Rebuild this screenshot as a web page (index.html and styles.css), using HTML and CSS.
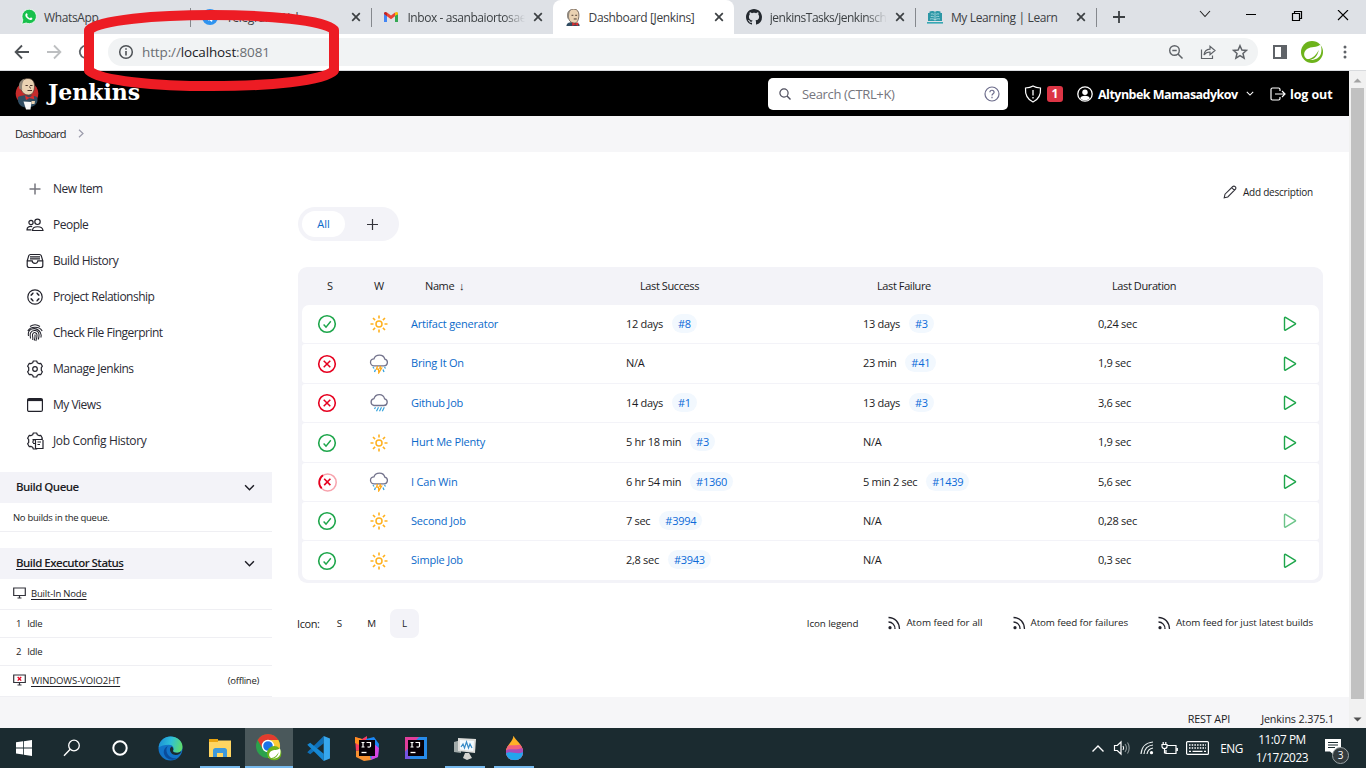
FILE: index.html
```html
<!DOCTYPE html>
<html lang="en">
<head>
<meta charset="utf-8">
<title>Dashboard [Jenkins]</title>
<link rel="stylesheet" href="styles.css">
</head>
<body>
<svg class="defs" width="0" height="0">
  <symbol id="x" viewBox="0 0 10 10"><path d="M1.2 1.2l7.6 7.6M8.8 1.2L1.2 8.8" stroke="#3c4043" stroke-width="1.7" fill="none"/></symbol>
  <symbol id="ok" viewBox="0 0 20 20"><circle cx="10" cy="10" r="8.3" fill="none" stroke="#1ea64b" stroke-width="1.6"/><path d="M6.6 10.6l2.4 2.5 4.8-5.9" fill="none" stroke="#1ea64b" stroke-width="1.4"/></symbol>
  <symbol id="bad" viewBox="0 0 20 20"><circle cx="10" cy="10" r="8.3" fill="none" stroke="#e6001f" stroke-width="1.6"/><path d="M6.7 6.7l6.6 6.6M13.3 6.7l-6.6 6.6" fill="none" stroke="#e6001f" stroke-width="1.5"/></symbol>
  <symbol id="busy" viewBox="0 0 20 20"><circle cx="10.7" cy="10.4" r="8.5" fill="none" stroke="#f7a3ad" stroke-width="1.5"/><path d="M4.700 16.400A8.500 8.500 0 0 1 6 3.300" fill="none" stroke="#e6001f" stroke-width="1.700"/><path d="M7.200 6.700l6.200 6.400M13.400 6.700l-6.200 6.400" fill="none" stroke="#e6001f" stroke-width="1.600"/></symbol>
  <symbol id="sun" viewBox="0 0 20 20"><circle cx="10" cy="10" r="3" fill="none" stroke="#ffb11f" stroke-width="1.500"/><path d="M10 1.500v3M10 15.500v3M1.500 10h3M15.500 10h3M4 4l2.100 2.100M13.900 13.900L16 16M4 16l2.100-2.100M13.900 6.100L16 4" stroke="#ffb11f" stroke-width="1.600" fill="none"/></symbol>
  <symbol id="storm" viewBox="0 0 20 20"><path d="M5 11.800h10.200a3.400 3.400 0 0 0 .6-6.700c-.6-2.400-2.600-4-5.300-4S5.700 2.600 5 4.800a3.500 3.500 0 0 0 0 7z" fill="#fff" stroke="#73738c" stroke-width="1.300"/><path d="M4 13l1 1.500M6.500 15.500l-1 2.500M15.500 13l1 1.500M14 15.500l1 2.500" stroke="#36a3dc" stroke-width="1.300"/><path d="M8.500 12l-1 3.200h2l.3 3.600 2.800-4.600h-1.800l.7-2.200" fill="none" stroke="#ffa914" stroke-width="1.300"/></symbol>
  <symbol id="rain" viewBox="0 0 20 20"><path d="M5 12.500h10a3.400 3.400 0 0 0 .6-6.700c-.6-2.600-2.600-4.200-5.200-4.200S5.700 3.200 5 5.600a3.500 3.500 0 0 0 0 6.900z" fill="#fff" stroke="#73738c" stroke-width="1.300"/><path d="M6.500 14.200l-1 1.800M9.500 14.200l-2 4M12.500 14.200l-2 4M15.300 14.200l-2 4" stroke="#36a3dc" stroke-width="1.200"/></symbol>
  <symbol id="play" viewBox="0 0 14 16"><path d="M1.500 1.900c0-.6.500-.8 1-.5l9.800 5.900c.4.300.4.600 0 .9l-9.800 5.900c-.5.300-1 .1-1-.5z" fill="none" stroke="#1ea64b" stroke-width="1.400"/></symbol>
  <symbol id="rss" viewBox="0 0 14 14"><path d="M1.500 6a6.500 6.500 0 0 1 6.500 7M1.500 1.500C8 1.500 12.300 6.500 12.500 13" fill="none" stroke="#22222b" stroke-width="1.300"/><circle cx="3" cy="11.700" r="1.600" fill="#22222b"/></symbol>
  <symbol id="down" viewBox="0 0 10 8"><path d="M1 2l4 4 4-4" fill="none" stroke="currentColor" stroke-width="1.300"/></symbol>
  <symbol id="gear" viewBox="0 0 18 18"><path d="M6.700 2.700L7.300 1h3.400l.6 1.700 1.600.9 1.800-.3 1.700 2.900-1.100 1.400v2.800l1.100 1.400-1.700 2.900-1.800-.3-1.600.9-.6 1.700H7.300l-.6-1.700-1.600-.9-1.800.3-1.700-2.900 1.100-1.400V7.600L1.600 6.200l1.700-2.900 1.800.3z" fill="none" stroke="#22222b" stroke-width="1.200" stroke-linejoin="round"/></symbol>
  <symbol id="spring" viewBox="0 0 22 22"><circle cx="11" cy="11" r="11" fill="#6db31b"/><path d="M19.500 3.500c-3.500 3.600-9.500 1.600-13.500 4.600-4 3-3.400 7.500-.5 9.600 4.500 2.800 12.500.8 14.400-5 .9-2.900.8-6.300-.4-9.200z" fill="#fff"/><path d="M4.500 18.500c5-.2 10-2.700 13.300-9.500-1.300 7-6 10.500-11.500 10.200z" fill="#6db31b"/></symbol>
  <symbol id="butler" viewBox="0 0 24 32"><circle cx="12" cy="15.500" r="11.300" fill="#c52b2b"/><path d="M3 19c3-2.500 15-2.500 19 0 1 3 .5 5-1 7-3 4-12 5-16 1-2-2-2.500-5-2-8z" fill="#304c61"/><path d="M5 8c0-5 4-7.500 8-7.500 5 0 6.500 4 6.500 7.500 0 5-2 9-6 9-5 0-7.500-4-8.500-9z" fill="#ead2b2" stroke="#4b3a30" stroke-width=".7"/><path d="M4.500 11C3 6 5 2 9.500.8 7.500 4 6.500 7 7.200 12z" fill="#8f8679"/><path d="M10.500 7.500h2.300M15 7.500h2.500M12.500 12.500h4.500M14.500 8.500l1 2" stroke="#4b352b" stroke-width="1" fill="none"/><path d="M10 17.500l4 2 4.500-2.500.8 4.300-4.800-1.300L11 22z" fill="#df2c2c"/><path d="M8.500 23.500l8 .5-1 7.500h-4.500z" fill="#f7f7f7"/><path d="M16.500 23h3.500l-.5 3h-3z" fill="#ead2b2"/></symbol>
  <symbol id="ij" viewBox="0 0 16 16"><path d="M0 0h16v16H0z" fill="#070007"/><path d="M2.500 2.500h3M4 2.500v4.500M2.500 7h3M7.500 2.500h4V6c0 1-1.500 1.500-3 .7" fill="none" stroke="#fff" stroke-width="1.200"/><path d="M2.500 12.500h5" stroke="#fff" stroke-width="1.300"/></symbol>
</svg>

<div class="screen">
  <div class="tabs">
    <div class="tab"><svg class="wa" width="16" height="16" viewBox="0 0 16 16"><path d="M.8 15.200l1-4.400A7.200 7.200 0 1 1 5.200 14z" fill="#18c04c" stroke="#fff" stroke-width=".8"/><path d="M5.500 4.200c.8-.3 1.100 1.400 1.100 1.700 0 .5-.6.7-.4 1.100.6 1.100 1.400 1.800 2.500 2.300.4.100.7-.8 1.100-.8.300 0 1.600.6 1.600.9 0 1-1 1.600-2 1.500C6.500 10.500 4.500 8 4.300 6.300c0-1 .6-1.900 1.200-2.100z" fill="#fff"/></svg><span class="tab-t">WhatsApp</span></div>
    <div class="tab sep"><svg width="16" height="16" viewBox="0 0 16 16"><circle cx="8" cy="8" r="8" fill="#2e93f0"/><path d="M3 8l9-4-2 9-3-2-1 1v-3z" fill="#fff"/></svg><span class="tab-t">Telegram Web</span><svg width="10" height="10"><use href="#x"/></svg></div>
    <div class="tab sep"><svg width="16" height="16" viewBox="0 0 16 16"><path d="M1 3.500V13h3V6.500z" fill="#4285f4"/><path d="M15 3.500V13h-3V6.500z" fill="#34a853"/><path d="M12 6.500V3.600c1.500-1.200 3-.6 3 .9v1z" fill="#fbbc04"/><path d="M4 3.600L8 6.600l4-3V7.300l-4 3-4-3z" fill="#ea4335"/><path d="M1 4.500c0-1.500 1.500-2.100 3-.9v3.700l-3-2.300z" fill="#c5221f"/></svg><span class="tab-t fade">Inbox - asanbaiortosae</span><svg width="10" height="10"><use href="#x"/></svg></div>
    <div class="tab on"><svg width="16" height="17" viewBox="2 0 20 23"><path d="M3 23c1-5 4-5 9-5s9 1 9 5z" fill="#304c61"/><path d="M5 8c0-5 4-8 8-8 5 0 7 4 7 8 0 6-2 11-6 11-5 0-8-3-9-11z" fill="#ead2b2" stroke="#55483e" stroke-width="1"/><path d="M4.500 13C3 6 5 2 9 .6 7 5 6 8 7 14z" fill="#8f877d"/><path d="M10 8.500h2.500M15 8.500h2.500M13 13.500h4" stroke="#3b2c25" stroke-width="1.200"/><path d="M11 18l4 2 4-2v5l-4-2-4 2z" fill="#df2c2c"/></svg><span class="tab-t">Dashboard [Jenkins]</span><svg width="10" height="10"><use href="#x"/></svg></div>
    <div class="tab"><svg width="16" height="16" viewBox="0 0 16 16"><path fill="#24292f" d="M8 0C3.580 0 0 3.580 0 8c0 3.540 2.290 6.530 5.470 7.590.4.070.55-.17.55-.38 0-.19-.01-.82-.01-1.490-2.010.37-2.530-.49-2.690-.94-.09-.23-.48-.94-.82-1.130-.28-.15-.68-.52-.01-.53.63-.01 1.080.58 1.230.82.72 1.210 1.870.87 2.330.66.07-.52.28-.87.51-1.070-1.780-.2-3.640-.89-3.640-3.950 0-.87.31-1.590.82-2.150-.08-.2-.36-1.020.08-2.120 0 0 .67-.21 2.200.82.64-.18 1.320-.27 2-.27s1.360.09 2 .27c1.530-1.040 2.200-.82 2.200-.82.44 1.100.16 1.920.08 2.120.51.56.82 1.270.82 2.150 0 3.070-1.870 3.750-3.650 3.950.29.25.54.73.54 1.480 0 1.070-.01 1.930-.01 2.200 0 .21.15.46.55.38A8.010 8.010 0 0 0 16 8c0-4.420-3.580-8-8-8z"/></svg><span class="tab-t fade gh">jenkinsTasks/jenkinsch</span><svg width="10" height="10"><use href="#x"/></svg></div>
    <div class="tab sep"><svg width="16" height="16" viewBox="0 0 16 16"><path d="M1 12V4h1.500V2.500C5 1.500 7 2 8 3c1-1 3-1.500 5.500-.5V4H15v8z" fill="#2c97a6"/><path d="M0 13h16v1.600H0z" fill="#36a7b4"/><path d="M8 3.500v8M3.800 5c1-.3 2-.2 3 .3M3.800 7.500c1-.3 2-.2 3 .3M9.200 5.300c1-.5 2-.6 3-.3M9.200 7.800c1-.5 2-.6 3-.3M3 10c2-.5 4-.2 5 1 1-1.200 3-1.500 5-1" fill="none" stroke="#bfe3e8" stroke-width=".8"/></svg><span class="tab-t">My Learning | Learn</span><svg width="10" height="10"><use href="#x"/></svg></div>
    <div class="newtab sep"><svg width="12" height="12" viewBox="0 0 12 12"><path d="M6 0v12M0 6h12" stroke="#3c4043" stroke-width="1.800"/></svg></div>
    <div class="winbtns">
      <svg width="12" height="8" viewBox="0 0 12 8"><path d="M1 1l5 5.500L11 1" fill="none" stroke="#222" stroke-width="1.100"/></svg>
      <svg width="12" height="10" viewBox="0 0 12 10"><path d="M1 4.500h10" stroke="#000"/></svg>
      <svg width="12" height="12" viewBox="0 0 12 12"><path d="M1.500 3.500h7v7h-7zM3.500 3.500v-2h7v7h-2" fill="none" stroke="#000" stroke-width="1.200"/></svg>
      <svg width="12" height="12" viewBox="0 0 12 12"><path d="M1 0l10 10M11 0L1 10" stroke="#000" stroke-width="1.100"/></svg>
    </div>
  </div>

  <div class="toolbar">
    <svg width="16" height="16" viewBox="0 0 16 16"><path d="M15 8H2M8 1.500L1.600 8 8 14.500" fill="none" stroke="#4e5256" stroke-width="1.800"/></svg>
    <svg width="16" height="16" viewBox="0 0 16 16"><path d="M1 8h13M8 1.500L14.400 8 8 14.500" fill="none" stroke="#bdbfc1" stroke-width="1.800"/></svg>
    <svg width="16" height="16" viewBox="0 0 16 16"><path d="M13 4.200A6.200 6.200 0 1 0 14.200 8M14 1v4.500H9.500" fill="none" stroke="#5f6368" stroke-width="1.800"/></svg>
    <div class="omni">
      <svg width="16" height="16" viewBox="0 0 16 16"><circle cx="8" cy="8" r="6.300" fill="none" stroke="#4e5256" stroke-width="1.500"/><path d="M8 7v4.500M8 4.300v1.500" stroke="#4e5256" stroke-width="1.600"/></svg>
      <span class="url">http://<b>localhost</b>:8081</span>
      <svg width="16" height="16" viewBox="0 0 16 16"><circle cx="6.500" cy="6.500" r="4.800" fill="none" stroke="#5f6368" stroke-width="1.400"/><path d="M10 10l4.500 4.500M4.300 6.500h4.400" stroke="#5f6368" stroke-width="1.500"/></svg>
      <svg width="16" height="16" viewBox="0 0 16 16"><path d="M1.500 5.500v9h11v-3M4 11c.4-4 2.500-5.700 6-5.900V2.200L15 6.500l-5 4.300V8C7.500 8 5.500 8.800 4 11z" fill="none" stroke="#5f6368" stroke-width="1.200"/></svg>
      <svg width="16" height="16" viewBox="0 0 16 16"><path d="M8 1.700l1.900 4.300 4.600.4-3.500 3.100 1.100 4.600L8 11.700l-4.100 2.400L5 9.500 1.500 6.400l4.600-.4z" fill="none" stroke="#5f6368" stroke-width="1.500"/></svg>
    </div>
    <svg width="14" height="14" viewBox="0 0 14 14"><path d="M1 1h12v12H1z" fill="#fff" stroke="#5f6368" stroke-width="2"/><path d="M8 1h5v12H8z" fill="#5f6368"/></svg>
    <svg class="ext" width="22" height="22"><use href="#spring"/></svg>
    <svg width="4" height="14" viewBox="0 0 4 14"><circle cx="2" cy="2" r="1.500" fill="#5f6368"/><circle cx="2" cy="7" r="1.500" fill="#5f6368"/><circle cx="2" cy="12" r="1.500" fill="#5f6368"/></svg>
  </div>

  <div class="view">
    <div class="page">
      <header class="top">
        <svg width="24" height="32"><use href="#butler"/></svg>
        <span class="brand">Jenkins</span>
        <div class="search">
          <svg width="12" height="12" viewBox="0 0 12 12"><circle cx="5" cy="5" r="4.100" fill="none" stroke="#4d4d5c" stroke-width="1.200"/><path d="M8 8l3.500 3.500" stroke="#4d4d5c" stroke-width="1.400"/></svg>
          <span class="ph">Search (CTRL+K)</span>
          <svg width="16" height="16" viewBox="0 0 16 16"><circle cx="8" cy="8" r="7" fill="none" stroke="#6d6d8c" stroke-width="1.200"/><path d="M5.900 6.300c.1-2.800 4.200-2.600 4.200 0 0 1.500-2.100 1.500-2.100 3.200M8 10.800v1.400" fill="none" stroke="#6d6d8c" stroke-width="1.200"/></svg>
        </div>
        <svg class="shield" width="18" height="18" viewBox="0 0 18 18"><path d="M9 1c2 1.300 4.500 1.900 7.500 2C17 10 14.500 14.500 9 17 3.500 14.500 1 10 1.500 3 4.500 2.900 7 2.300 9 1z" fill="none" stroke="#fff" stroke-width="1.200"/><path d="M9 5v5.500M9 12v1.400" stroke="#fff" stroke-width="1.300"/></svg>
        <span class="alert">1</span>
        <svg class="usr" width="16" height="16" viewBox="0 0 16 16"><circle cx="8" cy="8" r="7.200" fill="none" stroke="#fff" stroke-width="1.300"/><circle cx="8" cy="6.200" r="2.700" fill="#fff"/><path d="M3.200 12.200C4.500 9 11.500 9 12.800 12.200 10.500 15 5.500 15 3.200 12.200z" fill="#fff"/></svg>
        <span class="who">Altynbek Mamasadykov</span>
        <svg class="whod" width="8" height="7"><use href="#down"/></svg>
        <svg class="out" width="16" height="14" viewBox="0 0 16 14"><path d="M10 4V2.500c0-1-.5-1.500-1.500-1.500h-6C1.500 1 1 1.500 1 2.500v9c0 1 .5 1.500 1.500 1.500h6c1 0 1.500-.5 1.500-1.500V10M5 7h10M12 4l3 3-3 3" fill="none" stroke="#fff" stroke-width="1.200"/></svg>
        <span class="lo">log out</span>
      </header>
      <nav class="crumbs"><span>Dashboard</span><svg width="6" height="9" viewBox="0 0 6 9"><path d="M1 .7l4 3.800-4 3.800" fill="none" stroke="#9b9bab" stroke-width="1.200"/></svg></nav>

      <div class="body">
        <aside class="side">
          <ul class="tasks">
            <li><svg width="18" height="18" viewBox="0 0 18 18"><path d="M9 3.500v11M3.500 9h11" stroke="#77777f" stroke-width="1.500"/></svg><span>New Item</span></li>
            <li><svg width="18" height="18" viewBox="0 0 18 18"><g fill="none" stroke="#22222b" stroke-width="1.200"><circle cx="11.500" cy="5.800" r="2.700"/><circle cx="5" cy="6.500" r="2.100"/><path d="M6.500 14.500c0-5 10-5 10.500 0zM6.200 10.600C3 10 1 11.500 1 13.800h4.500"/></g></svg><span>People</span></li>
            <li><svg width="18" height="18" viewBox="0 0 18 18"><g fill="none" stroke="#22222b" stroke-width="1.200"><path d="M1.200 8.800h5c0 3.400 5.600 3.400 5.600 0h5v4.700c0 1.300-.7 2-2 2H3.200c-1.300 0-2-.7-2-2zM1.200 8.800l1.500-5c.3-1 .9-1.300 1.800-1.300h9c.9 0 1.500.3 1.800 1.300l1.500 5M4 4.800h10M4 6.900h10"/></g></svg><span>Build History</span></li>
            <li><svg width="18" height="18" viewBox="0 0 18 18"><circle cx="9" cy="9" r="7.200" fill="none" stroke="#22222b" stroke-width="1.200"/><path d="M7.500 5.300H7L5.300 7v.7M10.500 5.300h.5L12.700 7v.7M7.500 12.700H7L5.300 11v-.7M10.500 12.700h.5l1.700-1.700v-.7" fill="none" stroke="#22222b" stroke-width="1.600"/></svg><span>Project Relationship</span></li>
            <li><svg width="18" height="18" viewBox="0 0 18 18"><g fill="none" stroke="#22222b" stroke-width="1.050"><path d="M4 2.500c3-2 7-2 10 0M1.800 7C4.500 2 13.500 2 16.200 7M2.500 12C1 4.500 9 3 12.800 6.500c2.500 2.300 2.700 5 2 7M4.500 14.500c0-2-.8-3.500 0-5.500C6.500 5 12.500 6 13 10.500c.1 2-.2 3.500-.8 5M6.700 16c.6-2.500-.7-4.500 0-6C8 7.500 11 8.700 11 11c0 2-.3 4-1.200 6M9 10.500c.2 2.500-.1 4-.7 6"/></g></svg><span>Check File Fingerprint</span></li>
            <li><svg width="18" height="18" viewBox="0 0 18 18"><use href="#gear"/><circle cx="9" cy="9" r="2.300" fill="none" stroke="#22222b" stroke-width="1.200"/></svg><span>Manage Jenkins</span></li>
            <li><svg width="18" height="18" viewBox="0 0 18 18"><rect x="1.600" y="2.600" width="14.800" height="12.800" rx="1.500" fill="none" stroke="#22222b" stroke-width="1.200"/><path d="M1.600 4h14.800" stroke="#22222b" stroke-width="2.200"/></svg><span>My Views</span></li>
            <li><svg width="18" height="18" viewBox="0 0 18 18"><use href="#gear"/><path d="M9 8h8v9H9z" fill="#fff"/><path d="M7 11V9.500C7 7.500 9.500 7 9.500 9v7.500H17V8M6.500 7.500h10.300M7 11.500h2.500M11.500 10h3.500M11.500 12.500H14" fill="none" stroke="#22222b" stroke-width="1.200"/></svg><span class="jc">Job Config History</span></li>
          </ul>
          <div class="pane-h"><span>Build Queue</span><svg width="11" height="9"><use href="#down"/></svg></div>
          <div class="row q"><span>No builds in the queue.</span></div>
          <div class="pane-h second"><span class="u1">Build Executor Status</span><svg width="11" height="9"><use href="#down"/></svg></div>
          <div class="row n1"><svg width="13" height="12" viewBox="0 0 13 12"><path d="M.7 1h11.600v7.500H.7zM4.500 11h4M6.500 8.500V11" fill="none" stroke="#33333b" stroke-width="1.200"/></svg><span class="u">Built-In Node</span></div>
          <div class="row idle"><span>1</span><span>Idle</span></div>
          <div class="row idle"><span>2</span><span>Idle</span></div>
          <div class="row n2"><svg width="13" height="12" viewBox="0 0 13 12"><path d="M.7 1h11.600v7.500H.7zM4.500 11h4M6.500 8.500V11" fill="none" stroke="#33333b" stroke-width="1.200"/><path d="M4.700 3l3.500 3.600M8.200 3L4.700 6.600" stroke="#e6001f" stroke-width="1.300"/></svg><span class="u win">WINDOWS-VOIO2HT</span><span class="off">(offline)</span></div>
        </aside>

        <main class="main">
          <div class="desc"><svg width="14" height="14" viewBox="0 0 14 14"><path d="M1.200 12.800l.8-3.600L9.800 1.500c1.500-1.200 3.900.8 2.700 2.700L4.800 12zM8.800 2.700l2.600 2.600" fill="none" stroke="#33333b" stroke-width="1.100"/></svg><span>Add description</span></div>
          <div class="views"><span class="all">All</span><svg width="11" height="11" viewBox="0 0 11 11"><path d="M5.500 0v11M0 5.500h11" stroke="#33333b" stroke-width="1.200"/></svg></div>

          <div class="tbl">
            <div class="th"><span class="hs">S</span><span class="hw">W</span><span>Name&nbsp; ↓</span><span>Last Success</span><span>Last Failure</span><span>Last Duration</span></div>
            <div class="rows">
              <div class="tr"><svg class="st"><use href="#ok"/></svg><svg class="st"><use href="#sun"/></svg><a>Artifact generator</a><span>12 days<i>#8</i></span><span>13 days<i>#3</i></span><span>0,24 sec</span><svg class="pl"><use href="#play"/></svg></div>
              <div class="tr"><svg class="st"><use href="#bad"/></svg><svg class="st"><use href="#storm"/></svg><a>Bring It On</a><span>N/A</span><span>23 min<i>#41</i></span><span>1,9 sec</span><svg class="pl"><use href="#play"/></svg></div>
              <div class="tr"><svg class="st"><use href="#bad"/></svg><svg class="st"><use href="#rain"/></svg><a>Github Job</a><span>14 days<i>#1</i></span><span>13 days<i>#3</i></span><span>3,6 sec</span><svg class="pl"><use href="#play"/></svg></div>
              <div class="tr"><svg class="st"><use href="#ok"/></svg><svg class="st"><use href="#sun"/></svg><a>Hurt Me Plenty</a><span>5 hr 18 min<i>#3</i></span><span>N/A</span><span>1,9 sec</span><svg class="pl"><use href="#play"/></svg></div>
              <div class="tr"><svg class="st"><use href="#busy"/></svg><svg class="st"><use href="#storm"/></svg><a>I Can Win</a><span>6 hr 54 min<i>#1360</i></span><span>5 min 2 sec<i>#1439</i></span><span>5,6 sec</span><svg class="pl"><use href="#play"/></svg></div>
              <div class="tr"><svg class="st"><use href="#ok"/></svg><svg class="st"><use href="#sun"/></svg><a>Second Job</a><span>7 sec<i>#3994</i></span><span>N/A</span><span>0,28 sec</span><svg class="pl dim"><use href="#play"/></svg></div>
              <div class="tr"><svg class="st"><use href="#ok"/></svg><svg class="st"><use href="#sun"/></svg><a>Simple Job</a><span>2,8 sec<i>#3943</i></span><span>N/A</span><span>0,3 sec</span><svg class="pl"><use href="#play"/></svg></div>
            </div>
          </div>

          <div class="legend">
            <span class="ic">Icon:</span><span class="sz">S</span><span class="sz">M</span><span class="sz cur">L</span>
            <span class="lg">Icon legend</span>
            <span class="feed f1"><svg width="14" height="14"><use href="#rss"/></svg><span>Atom feed for all</span></span>
            <span class="feed"><svg width="14" height="14"><use href="#rss"/></svg><span>Atom feed for failures</span></span>
            <span class="feed f3"><svg width="14" height="14"><use href="#rss"/></svg><span>Atom feed for just latest builds</span></span>
          </div>
        </main>
      </div>
      <footer class="foot"><span>REST API</span><span>Jenkins 2.375.1</span></footer>
    </div>
    <div class="scroll"><svg width="9" height="5" viewBox="0 0 9 5"><path d="M.5 4.500l4-4 4 4z" fill="#a3a3a3"/></svg><div class="thumb"></div><svg width="9" height="5" viewBox="0 0 9 5"><path d="M.5.5l4 4 4-4z" fill="#505050"/></svg></div>
  </div>

  <div class="taskbar">
    <div class="tb"><svg width="16" height="16" viewBox="0 0 16 16"><path d="M0 2.300l7-1v6.200H0zM7.800 1.200L16 0v7.500H7.800zM0 8.400h7v6.200l-7-1zM7.800 8.400H16V16l-8.200-1.200z" fill="#fff"/></svg></div>
    <div class="tb"><svg width="18" height="18" viewBox="0 0 18 18"><circle cx="11" cy="6.500" r="5.300" fill="none" stroke="#fff" stroke-width="1.300"/><path d="M7.200 10.300L1 16.800" stroke="#fff" stroke-width="1.400"/></svg></div>
    <div class="tb"><svg width="18" height="18" viewBox="0 0 18 18"><circle cx="9" cy="9" r="6.700" fill="none" stroke="#fff" stroke-width="2"/></svg></div>
    <div class="tb g"><svg width="25" height="25" viewBox="0 0 24 24"><defs><linearGradient id="eg" x1="0" y1=".3" x2="1" y2=".5"><stop offset="0" stop-color="#1b8fd6"/><stop offset=".5" stop-color="#2fc0d8"/><stop offset="1" stop-color="#5fdc6b"/></linearGradient></defs><circle cx="12" cy="12" r="11.500" fill="#1273c8"/><path d="M.6 11C1.500 4.500 6 .5 12 .5c6.500 0 11.500 4.500 11.500 9.700 0 4-2.700 5.800-5.700 5.800-2.500 0-3.800-1-3.300-2 1.300-2.500 0-5.700-4-5.700-4.500 0-8 1-9.900 2.700z" fill="url(#eg)"/><path d="M9.500 9.500c-3.500 4-.5 12.500 8.500 12.200-5 3-12 0-12.500-6 0-3 1.500-5.200 4-6.200z" fill="#0a4c9c"/><path d="M14.500 14c-.5 1 .8 2 3.300 2 2 0 3.500-.5 4.700-1.700-.8 2.300-3 3.900-5.500 3.900-3.500 0-5.500-2.700-5.500-5.200 0-1.500.8-2.500 1.700-3 1.300 1 2 2.500 1.300 4z" fill="#1b2b30"/></svg></div>
    <div class="tb open"><svg width="22" height="20" viewBox="0 0 22 20"><path d="M0 2.500h22V19H0z" fill="#ffd561"/><path d="M0 1h9v3H0z" fill="#eaa40f"/><path d="M4 19v-6.500c0-1.500 1-2.500 2.500-2.500h9c1.500 0 2.500 1 2.500 2.500V19h-4v-4H8v4z" fill="#3d99dc"/></svg></div>
    <div class="tb active"><svg width="26" height="28" viewBox="0 0 26 28"><circle cx="12" cy="13" r="12" fill="#2ba24c"/><path d="M1.600 7A12 12 0 0 1 22.400 7H12a6 6 0 0 0-5.200 9z" fill="#e33b2e"/><path d="M22.400 7A12 12 0 0 1 12 25l5.200-9A6 6 0 0 0 12 7z" fill="#fcc934"/><circle cx="12" cy="13" r="5.500" fill="#1a73e8" stroke="#fff" stroke-width="1.400"/><g transform="translate(11 13) scale(.66)"><use href="#spring" width="22" height="22"/></g></svg></div>
    <div class="tb"><svg width="25" height="25" viewBox="0 0 24 24"><path d="M17 0v7L4 17.500 1.200 15.500z" fill="#0f70b8"/><path d="M1.200 8.500L4 6.500 17 17v7z" fill="#1688d4"/><path d="M17 0l6 2.500v19L17 24z" fill="#36a7ee"/></svg></div>
    <div class="tb"><svg width="24" height="25" viewBox="0 0 24 25"><path d="M0 1l7 2 5-3v12L1 15z" fill="#f83b63"/><path d="M0 1l7 2-3 6-4-2z" fill="#ff9020"/><path d="M11 3l8-2 5 7-1 13-8 3z" fill="#1b87f5"/><path d="M19 8l5 4-1 9-7 3z" fill="#d744df"/><path d="M1 15l12-3 3 12-7 1-8-4z" fill="#f99131"/><svg x="4" y="4" width="16" height="16"><use href="#ij"/></svg></svg></div>
    <div class="tb"><svg width="22" height="22" viewBox="0 0 22 22"><path d="M0 0h22v22H0z" fill="#278bea"/><path d="M0 0h14L0 15z" fill="#e13e9b"/><path d="M0 15l5-4v11H0z" fill="#7654e2"/><svg x="3" y="3" width="16" height="16"><use href="#ij"/></svg></svg></div>
    <div class="tb open"><svg width="24" height="24" viewBox="0 0 24 24"><path d="M1 6l7-2v13l-7-1z" fill="#a1aaa9"/><path d="M5 2l18 1-1 14-17-2z" fill="#dededb"/><path d="M7 4l14 1-.8 10L7 13.500z" fill="#f3fbff"/><path d="M8 11l2-3 1.500 4 2-6 2 6 1.500-4 2 4" fill="none" stroke="#378bc7" stroke-width="1.200"/><path d="M12 17h4l3 5-5 2-4-2z" fill="#d4d4cf"/></svg></div>
    <div class="tb open"><svg width="19" height="26" viewBox="0 0 20 26"><defs><clipPath id="drop"><path d="M9 0c2.500 5.500 10 9.500 10 17 0 6-4.500 9-9 9s-9-3-9-9C1 10 8 7 9 0z"/></clipPath></defs><g clip-path="url(#drop)"><path d="M0 0h20v26H0z" fill="#ffb126"/><path d="M0 12C5 8 12 12 20 8v18H0z" fill="#f1617d"/><path d="M0 16c6-4 11 1 20-4v14H0z" fill="#a84dba"/><path d="M0 19c6-4 12 2 20-2v9H0z" fill="#23a5ed"/></g></svg></div>
    <div class="tray">
      <svg width="14" height="9" viewBox="0 0 14 9"><path d="M1.500 7.500L7 2l5.500 5.500" fill="none" stroke="#fff" stroke-width="1.400"/></svg>
      <svg class="t2" width="18" height="16" viewBox="0 0 18 16"><path d="M1.500 5.500h2.800L8 2v12l-3.700-3.500H1.500z" fill="none" stroke="#fff" stroke-width="1.200"/><path d="M10 6c.8 1.200.8 2.800 0 4" fill="none" stroke="#fff" stroke-width="1.100"/><path d="M12 4c1.800 2.400 1.800 5.600 0 8M14.500 2.500c2.200 3 2.200 8 0 11" fill="none" stroke="#8b9597" stroke-width="1.100"/></svg>
      <svg class="t3" width="14" height="14" viewBox="0 0 14 14"><path d="M1 13C1.500 6 6 1.500 13 1M4 13c.5-5 4-8.500 9-9M7 13c.5-3 3-5.500 6-6" fill="none" stroke="#e9eeee" stroke-width="1.200"/><circle cx="11.500" cy="11.700" r="1.600" fill="#fff"/></svg>
      <svg class="t4" width="17" height="14" viewBox="0 0 17 14"><path d="M6.500 4.500H15v8H5V9M1 3.500h5v2c0 1.300-1 2-2.500 2S1 6.800 1 5.500zM2.200 1v2.500M4.800 1v2.500M3.500 7.500V12H5M16.300 7v3" fill="none" stroke="#fff" stroke-width="1.200"/></svg>
      <svg class="t5" width="23" height="14" viewBox="0 0 23 14"><rect x=".6" y=".6" width="21.800" height="12.800" rx="1" fill="none" stroke="#fff" stroke-width="1.200"/><path d="M3 4h17M3 7h17" stroke="#fff" stroke-width="1.300" stroke-dasharray="1.500 1.200"/><path d="M3 10.300h2M6.500 10.300h10M18 10.300h2" stroke="#fff" stroke-width="1.300"/></svg>
      <span class="eng">ENG</span>
      <div class="clock"><span>11:07 PM</span><span>1/17/2023</span></div>
      <div class="note"><svg width="16" height="17" viewBox="0 0 16 17"><path d="M0 0h16v12.500H9.500v4L5 12.500H0z" fill="#fff"/><path d="M3 3.500h10M3 6h10M3 8.500h7" stroke="#1b2b30" stroke-width="1.100"/></svg><span class="cnt">3</span></div>
    </div>
  </div>

  <svg class="mark" width="256" height="84" viewBox="84 9 256 84"><path d="M89 30C110 10 314 10 334 30V70.500C314 91.300 110 91.300 89 70.500z" fill="none" stroke="#ed1c24" stroke-width="10" stroke-linejoin="round"/></svg>
</div>
</body>
</html>
```
FILE: styles.css
```css
* { box-sizing: border-box; }
body { margin: 0; overflow: hidden; font-family: "Open Sans", "Noto Sans", sans-serif; color: #1c1c24; }
.defs { position: absolute; }
svg { flex: none; }
.screen { position: relative; width: 1366px; height: 768px; display: flex; flex-direction: column; overflow: hidden; white-space: nowrap; }

.tabs { height: 34px; background: #dee1e6; display: flex; padding-left: 9px; flex: none; }
.tab { width: 181.200px; display: flex; align-items: center; padding: 0 10px 0 12px; gap: 8px; position: relative; font-size: 12px; letter-spacing: -.36px; color: #3c4043; }
.tab-t { flex: 1; min-width: 0; }
.wa { margin-right: -1px; }
.tab.on { background: #fff; border-radius: 8px 8px 0 0; }
.sep::before { content: ""; position: absolute; left: 0; top: 8px; width: 1px; height: 19px; background: #85888d; }
.fade { letter-spacing: -.42px; -webkit-mask-image: linear-gradient(90deg, #000 82%, transparent 100%); mask-image: linear-gradient(90deg, #000 82%, transparent 100%); }
.gh { letter-spacing: -.5px; }
.newtab { position: relative; width: 46px; display: flex; align-items: center; justify-content: center; }
.winbtns { flex: 1; display: flex; align-items: flex-start; justify-content: flex-end; gap: 34px; padding: 10px 17px 0 0; }

.toolbar { height: 37px; background: #fff; border-bottom: 1px solid #d9dbde; display: flex; align-items: center; padding: 0 19px 0 14px; flex: none; }
.toolbar > svg:nth-child(-n+2) { margin-right: 16px; }
.omni { width: 1150px; height: 28px; border-radius: 14px; background: #f1f3f4; margin: 0 15px 0 14px; display: flex; align-items: center; padding: 0 10px; gap: 16px; }
.url { flex: 1; margin-left: -8px; font-size: 13.500px; letter-spacing: -.13px; color: #6a6e73; }
.url b { font-weight: 400; color: #202124; }
.toolbar .ext { margin: 0 20px 0 14px; }

.view { height: 657px; display: flex; flex: none; }
.page { width: 1349px; background: #fff; display: flex; flex-direction: column; overflow: hidden; }
.top { height: 45px; background: #000; color: #fff; display: flex; align-items: center; padding-left: 15px; flex: none; font-size: 12.500px; font-weight: 700; }
.brand { font: 700 22px "DejaVu Serif", serif; letter-spacing: -.05px; width: 729px; padding-left: 9px; line-height: 43px; height: 45px; }
.search { width: 240px; height: 32px; border-radius: 5px; background: #fff; display: flex; align-items: center; padding: 0 8px 0 11px; gap: 11px; }
.ph { flex: 1; font-size: 13px; letter-spacing: -.35px; font-weight: 400; color: #75757d; }
.shield { margin-left: 16px; }
.alert { width: 16px; height: 16px; margin-left: 5px; border-radius: 3px; background: #dc3545; font-size: 12px; line-height: 16px; text-align: center; }
.usr { margin-left: 14px; }
.who { margin-left: 5px; width: 142px; letter-spacing: -.52px; padding-top: 1px; }
.whod { margin-left: 6px; }
.out { margin-left: 16px; }
.lo { margin-left: 4px; letter-spacing: -.1px; padding-top: 1px; }
.crumbs { height: 36px; background: #f6f6f8; display: flex; align-items: center; padding: 0 0 1px 15px; gap: 12px; font-size: 11px; letter-spacing: -.65px; flex: none; }
.body { height: 545px; display: flex; flex: none; }

.side { width: 272px; padding-top: 19px; }
.tasks { list-style: none; margin: 0 0 13px; padding: 0; }
.tasks li { height: 36px; display: flex; align-items: center; gap: 9px; padding-left: 26px; font-size: 12px; letter-spacing: -.5px; color: #2b2b35; }
.tasks span { padding-bottom: 2px; }
.tasks .jc { letter-spacing: -.35px; }
.pane-h { height: 31px; background: #f3f3f8; display: flex; align-items: center; justify-content: space-between; padding: 0 17px 0 16px; font-size: 11.500px; font-weight: 600; letter-spacing: -.52px; }
.pane-h span { padding-bottom: 2px; }
.second { margin-top: 16px; }
.u1, .u { text-decoration: underline; text-underline-offset: 2px; }
.row { border-bottom: 1px solid #efeff3; display: flex; align-items: center; padding: 0 13px; font-size: 9.500px; letter-spacing: -.28px; gap: 5px; }
.q { height: 29px; }
.n1 { height: 31px; padding-bottom: 2px; letter-spacing: -.2px; }
.idle { height: 28px; padding-left: 16px; gap: 6px; }
.n2 { height: 31px; padding-bottom: 2px; }
.win { letter-spacing: -.1px; }
.off { margin-left: auto; }

.main { margin-left: 26px; width: 1025px; }
.desc { height: 24px; margin-top: 28px; padding-right: 10px; display: flex; align-items: center; justify-content: flex-end; gap: 6px; font-size: 10px; letter-spacing: -.22px; }
.views { margin-top: 3px; width: 101px; height: 34px; border-radius: 17px; background: #f3f3f8; display: flex; align-items: center; padding: 4px; gap: 22px; }
.all { width: 43px; height: 26px; border-radius: 13px; background: #fff; color: #0b6aca; font-size: 11px; line-height: 26px; text-align: center; font-weight: 500; }
.tbl { margin-top: 26px; height: 316px; border-radius: 9px; background: #f3f3f8; padding: 0 4px 3px; font-size: 11px; letter-spacing: -.3px; }
.th, .tr { display: grid; grid-template-columns: 50px 53px 215px 237px 235px 168px 59px; align-items: center; }
.th { height: 38px; letter-spacing: -.4px; }
.th span { padding: 0 0 2px 20px; }
.th .hs { padding-left: 25px; }
.th .hw { padding-left: 22px; }
.rows { display: grid; grid-template-rows: 38px 39px 38px 39px 38px 38px 39px; gap: 1px; }
.tr { background: #fff; border-radius: 3px; }
.tr:first-child { border-radius: 7px 7px 3px 3px; }
.tr:last-child { border-radius: 3px 3px 7px 7px; }
.tr > a, .tr > span { padding: 0 0 2px 6px; }
.tr > a { color: #0b6aca; font-weight: 500; letter-spacing: -.2px; }
.tr i { display: inline-block; margin-left: 9px; padding: 0 6px; height: 19px; line-height: 19px; border-radius: 10px; background: #f2f8fe; color: #0b6ad8; font-style: normal; font-weight: 500; letter-spacing: -.25px; }
.st { width: 20px; height: 20px; justify-self: center; }
.pl { width: 14px; height: 16px; justify-self: center; }
.dim { opacity: .65; }
.legend { height: 29px; margin-top: 26px; display: flex; align-items: center; font-size: 9.800px; letter-spacing: -.1px; }
.legend > span:not(.cur), .feed span { padding-bottom: 1px; }
.ic { width: 28px; margin-left: -1px; font-size: 11px; letter-spacing: -.4px; }
.sz { width: 29px; margin-right: 3px; text-align: center; }
.sz:nth-child(4) { margin-left: 1px; }
.cur { height: 29px; line-height: 29px; border-radius: 7px; background: #f3f3f8; }
.lg { margin-left: auto; }
.feed { display: flex; align-items: center; gap: 5px; margin-left: 29px; }
.f1 { letter-spacing: 0; }
.f3 { margin-right: 10px; }
.foot { flex: 1; background: #f6f6f8; display: flex; justify-content: flex-end; align-items: flex-end; padding: 0 15px 2px 0; gap: 31px; font-size: 10.800px; letter-spacing: -.15px; }
.scroll { width: 17px; background: #f1f1f1; display: flex; flex-direction: column; align-items: center; padding: 7px 0 6px; }
.thumb { width: 13px; flex: 1; margin: 5px 0 18px; background: #c1c1c1; }

.taskbar { height: 40px; background: #1b2b30; display: flex; flex: none; color: #fff; }
.tb { width: 48px; display: flex; align-items: center; justify-content: center; }
.tb.g { width: 52px; }
.tb:nth-child(n+5) { width: 48px; margin-right: 1px; }
.tb.open { background: linear-gradient(#76b9ed, #76b9ed) center bottom / 40px 2px no-repeat; }
.tb.active { background: #4a585b; border-bottom: 2px solid #76b9ed; }
.tray { flex: 1; display: flex; align-items: center; justify-content: flex-end; padding-right: 17px; font-size: 11.800px; letter-spacing: -.4px; }
.t2 { margin-left: 8px; }
.t3 { margin-left: 9px; }
.t4 { margin-left: 7px; }
.t5 { margin-left: 8px; }
.eng { margin-left: 11px; }
.clock { margin-left: 12px; width: 54px; display: flex; flex-direction: column; align-items: center; line-height: 18px; }
.note { position: relative; margin: 4px 0 0 16px; width: 24px; height: 22px; }
.cnt { position: absolute; left: 7px; top: 8px; width: 17px; height: 17px; border: 1px solid #9aa3a5; border-radius: 50%; background: #333b3e; font-size: 10px; line-height: 15px; text-align: center; letter-spacing: 0; }
.mark { position: absolute; left: 84px; top: 9px; }
```
